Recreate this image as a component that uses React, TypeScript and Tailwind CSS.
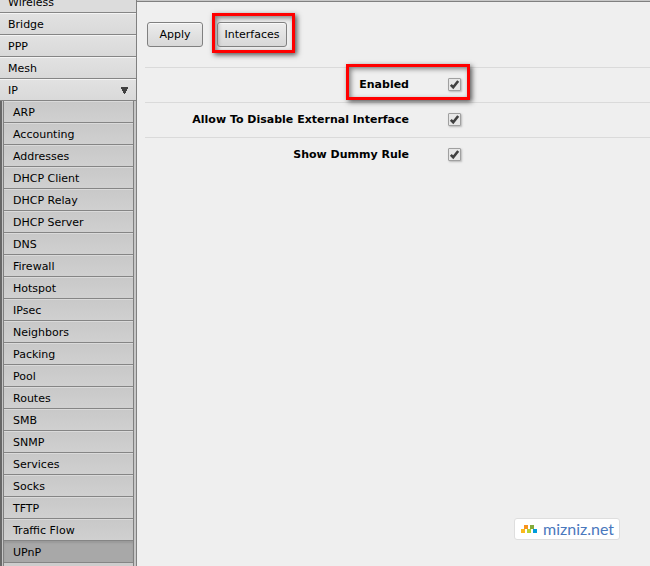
import { useState } from "react";
import clsx from "clsx";

const topItems = ["Bridge", "PPP", "Mesh"];

const ipItems = [
  "ARP",
  "Accounting",
  "Addresses",
  "DHCP Client",
  "DHCP Relay",
  "DHCP Server",
  "DNS",
  "Firewall",
  "Hotspot",
  "IPsec",
  "Neighbors",
  "Packing",
  "Pool",
  "Routes",
  "SMB",
  "SNMP",
  "Services",
  "Socks",
  "TFTP",
  "Traffic Flow",
  "UPnP",
];

const settings = [
  { id: "enabled", label: "Enabled", marked: true },
  { id: "allow-disable", label: "Allow To Disable External Interface", marked: false },
  { id: "dummy-rule", label: "Show Dummy Rule", marked: false },
];

const topRow =
  "flex h-[22px] items-center justify-between border-b border-[#858585] bg-linear-to-b from-[#e2e2e2] to-[#d9d9d9] px-2 pt-[2px] shadow-[inset_0_1px_0_#f4f4f4]";

const Sidebar = () => {
  return (
    <nav className="flex w-[137px] shrink-0 flex-col border-r border-[#808080] bg-[#dcdcdc]">
      {/* First row is scrolled partly out of view */}
      <a href="#wireless" className="flex h-[13px] shrink-0 items-end border-b border-[#858585] px-2 leading-[18px]">
        Wireless
      </a>
      {topItems.map((item) => (
        <a key={item} href={`#${item}`} className={topRow}>
          {item}
        </a>
      ))}
      <a href="#IP" className={topRow}>
        IP
        <svg viewBox="0 0 7 7" className="h-[7px] w-[7px]" shapeRendering="crispEdges" aria-hidden="true">
          <path d="M0 0h7v2H6v2H5v2H4v1H3V6H2V4H1V2H0z" fill="#404040" />
        </svg>
      </a>

      {/* IP submenu */}
      <div className="flex grow flex-col border-l-2 border-[#686868] bg-[#c6c6c6] pl-px pr-[2px]">
        <div className="flex grow flex-col border-x border-[#808080] bg-[#cdcdcd]">
          {ipItems.map((item) => (
            <a
              key={item}
              href={`#${item}`}
              className={clsx(
                "flex h-[22px] shrink-0 items-center border-b border-[#858585] px-[9px] pt-[2px]",
                item === "UPnP"
                  ? "bg-[#a8a8a8] shadow-[inset_0_2px_2px_#999999]"
                  : "bg-linear-to-b from-[#c8c8c8] to-[#d0d0d0] shadow-[inset_0_1px_0_#dadada]"
              )}
            >
              {item}
            </a>
          ))}
        </div>
      </div>
    </nav>
  );
};

const ToolButton = ({ children }: { children: string }) => (
  <button
    type="button"
    className="h-[25px] rounded-[3px] border border-[#808080] bg-linear-to-b from-[#ececec] to-[#d8d8d8] px-[6px] shadow-[inset_0_1px_0_#fafafa]"
  >
    {children}
  </button>
);

// Red callout frame, drawn over whatever it surrounds
const Marker = ({ className }: { className: string }) => (
  <span
    className={clsx(
      "pointer-events-none absolute border-3 border-[#ff0000] shadow-[2px_2px_5px_#555555,inset_2px_2px_5px_#808080]",
      className
    )}
  />
);

const Check = ({ id }: { id: string }) => {
  const [checked, setChecked] = useState(true);
  return (
    <span className="relative block h-[13px] w-[13px]">
      <input
        id={id}
        type="checkbox"
        checked={checked}
        onChange={(e) => setChecked(e.target.checked)}
        className="block h-[13px] w-[13px] appearance-none rounded-[1px] border border-[#a0a0a0] bg-[#e7e7e7] shadow-[1px_1px_2px_#b8b8b8]"
      />
      {checked && (
        <svg viewBox="0 0 13 13" className="pointer-events-none absolute inset-0" aria-hidden="true">
          <path d="M2.8 6.8l2.4 2.4L10.2 3" fill="none" stroke="#404040" strokeWidth="2.6" />
        </svg>
      )}
    </span>
  );
};

const Watermark = () => (
  <div className="absolute right-[30px] bottom-[26px] flex h-[22px] w-[106px] items-center gap-[6px] rounded-[3px] border border-[#dedede] bg-white px-[6px]">
    <svg viewBox="0 0 16 8" className="h-2 w-4 shrink-0" shapeRendering="crispEdges" aria-hidden="true">
      <path d="M0 4h4v4H0z" fill="#fbb91c" />
      <path d="M3 0h4v4H3z" fill="#f7941d" />
      <path d="M6 4h4v4H6z" fill="#b5d334" />
      <path d="M9 0h4v4H9z" fill="#85ab3b" />
      <path d="M12 4h4v4h-4z" fill="#009ddc" />
    </svg>
    <span className="font-[Lato,sans-serif] text-[16px] leading-[18px] text-[#4a78bd]">mizniz.net</span>
  </div>
);

const App = () => {
  return (
    <div className="relative flex h-screen overflow-hidden bg-[#efefef] font-['DejaVu_Sans',Verdana,sans-serif] text-[11px] leading-[14px] text-black">
      <Sidebar />
      <main className="min-w-0 grow border-t border-[#c8c8c8]">
        <div className="border-t border-[#808080] pt-5">
          <div className="flex gap-[14px] pl-[10px] pb-5">
            <div className="flex w-14 flex-col">
              <ToolButton>Apply</ToolButton>
            </div>
            <div className="relative flex w-[70px] flex-col">
              <ToolButton>Interfaces</ToolButton>
              <Marker className="-top-[9px] -right-2 -bottom-[6px] -left-[5px]" />
            </div>
          </div>
          <form className="ml-2">
            {settings.map((row) => (
              <div key={row.id} className="flex h-[35px] items-center border-t border-[#dadada]">
                <div className="relative flex items-start gap-[39px]">
                  <label htmlFor={row.id} className="w-[264px] text-right font-bold">
                    {row.label}
                  </label>
                  <Check id={row.id} />
                  {row.marked && <Marker className="-top-[14px] -right-[9px] -bottom-[8px] left-[201px]" />}
                </div>
              </div>
            ))}
          </form>
        </div>
      </main>
      <Watermark />
    </div>
  );
};

export default App;
